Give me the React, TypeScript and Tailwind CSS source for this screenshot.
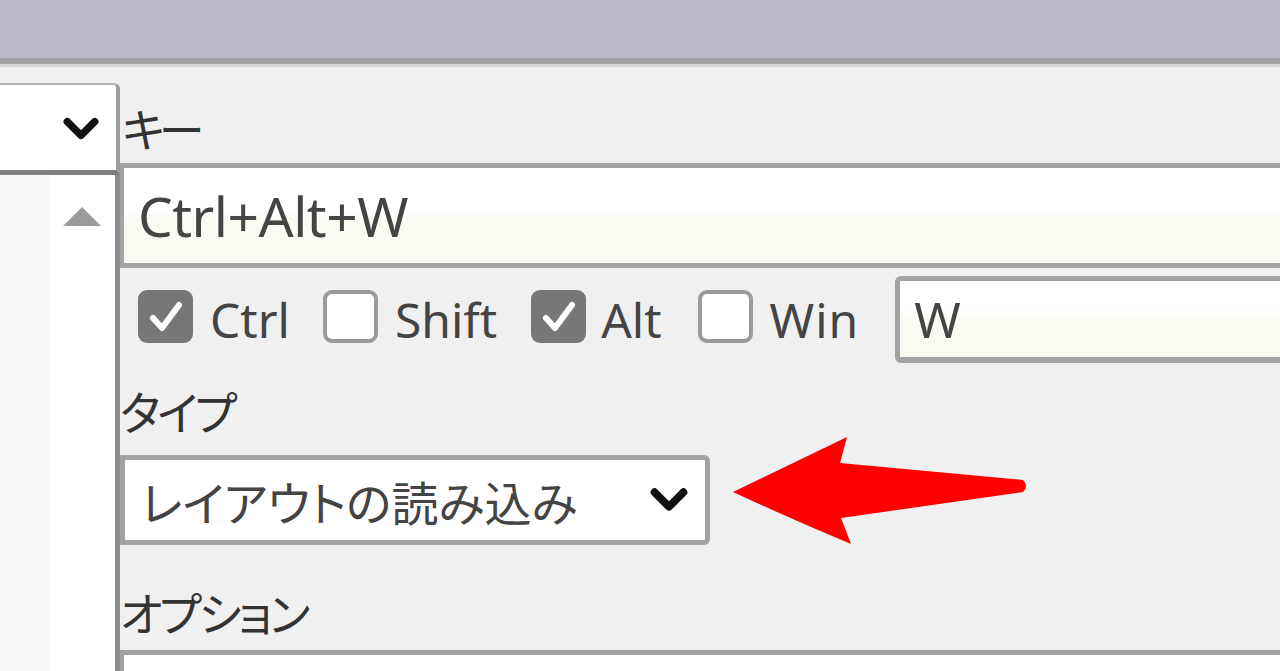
import React from "react";

const jp = "font-['Noto_Sans_CJK_JP',sans-serif] [font-feature-settings:'palt']";
const lat = "font-['Noto_Sans','Noto_Sans_CJK_JP',sans-serif]";

function Check({ checked }: { checked: boolean }) {
  if (checked) {
    return (
      <div className="w-[55px] h-[53px] rounded-[9px] bg-[#777777] flex items-center justify-center shrink-0">
        <svg width="36" height="34" viewBox="0 0 36 34">
          <polyline points="5,18 14,28 31,5" fill="none" stroke="#ffffff" strokeWidth="6" strokeLinecap="round" strokeLinejoin="round" />
        </svg>
      </div>
    );
  }
  return <div className="w-[55px] h-[53px] rounded-[9px] bg-white border-[4px] border-[#9a9a9a] shrink-0" />;
}

function Chevron({ w, h }: { w: number; h: number }) {
  return (
    <svg width={w} height={h} viewBox="0 0 36 24">
      <polyline points="5,5 18,18 31,5" fill="none" stroke="#111111" strokeWidth="7" strokeLinecap="round" strokeLinejoin="round" />
    </svg>
  );
}

export default function App() {
  return (
    <div className="relative w-[1280px] h-[671px] overflow-hidden bg-[#f0f0f0] flex flex-col">
      <div className="h-[58px] bg-[#bbbbc8] shrink-0" />
      <div className="h-[6px] bg-[#a3a3a3] shrink-0" />
      <div className="h-[3px] bg-[#d4d4d4] shrink-0" />
      <div className="flex flex-1 min-h-0">
        {/* left panel */}
        <div className="w-[120px] shrink-0 flex flex-col">
          <div className="h-[16px]" />
          <div className="h-[92px] bg-white border-t-2 border-[#b4b4b4] border-r-[4px] border-r-[#9c9c9c] border-b-[5px] border-b-[#7f7f7f] rounded-tr-[6px] flex items-center justify-end pr-[16px] pt-[2px]">
            <Chevron w={38} h={26} />
          </div>
          <div className="flex-1 flex border-r-[5px] border-[#8c8c8c]">
            <div className="w-[49px] bg-[#f8f8f8]" />
            <div className="flex-1 bg-white flex justify-center pt-[30px]">
              <svg width="42" height="22" viewBox="0 0 42 22">
                <polygon points="21,2 40,21 2,21" fill="#9a9a9a" />
              </svg>
            </div>
          </div>
        </div>

        {/* right panel */}
        <div className="flex-1 flex flex-col min-w-0">
          <div className={`${jp} text-[46px] leading-[48px] text-[#333333] tracking-[-6px] pl-[2px] pt-[36px] mb-[12px]`}>キー</div>
          <div className="h-[105px] border-y-[5px] border-l-[4px] border-[#a2a2a2] bg-[linear-gradient(to_bottom,#ffffff_0%,#ffffff_45%,#fafaf3_55%,#f9f9f2_100%)] flex items-center pl-[14px]">
            <span className={`${lat} text-[55px] leading-none text-[#444444] tracking-[-0.5px]`}>Ctrl+Alt+W</span>
          </div>
          <div className="flex items-center pt-[3px] h-[94px] pl-[18px]">
            <div className="flex items-center">
              <Check checked />
              <span className={`${lat} text-[48px] leading-none text-[#444444] ml-[17px] mr-[33px] pt-[6px]`}>Ctrl</span>
              <Check checked={false} />
              <span className={`${lat} text-[48px] leading-none text-[#444444] ml-[17px] mr-[34px] pt-[6px]`}>Shift</span>
              <Check checked />
              <span className={`${lat} text-[48px] leading-none text-[#444444] ml-[15px] mr-[36px] pt-[6px]`}>Alt</span>
              <Check checked={false} />
              <span className={`${lat} text-[48px] leading-none text-[#444444] ml-[17px] tracking-[1px] pt-[6px]`}>Win</span>
            </div>
            <div className="ml-[36px] flex-1 h-[87px] mt-[6px] border-t-[5px] border-l-[5px] border-b-[6px] border-[#a2a2a2] rounded-l-[6px] bg-[linear-gradient(to_bottom,#ffffff_0%,#ffffff_38%,#fafaf3_48%,#f9f9f2_100%)] flex items-center pl-[14px]">
              <span className={`${lat} text-[50px] leading-none text-[#444444]`}>W</span>
            </div>
          </div>
          <div className={`${jp} text-[46px] leading-[48px] text-[#333333] tracking-[-3px] mt-[24px] mb-[21px]`}>タイプ</div>
          <div className="relative flex items-center">
            <div className="w-[590px] h-[90px] bg-white border-[5px] border-[#a2a2a2] rounded-r-[6px] flex items-center justify-between pl-[16px] pr-[16px]">
              <span className={`${jp} text-[47px] leading-none text-[#444444]`}>レイアウトの読み込み</span>
              <Chevron w={40} h={28} />
            </div>
          </div>
          <div className={`${jp} text-[46px] leading-[48px] text-[#333333] tracking-[-3px] mt-[42px] mb-[15px]`}>オプション</div>
          <div className="flex-1 border-t-[5px] border-l-[4px] border-[#a2a2a2] bg-white" />
        </div>
      </div>

      {/* red annotation arrow */}
      <svg className="absolute left-[729px] top-[435px] pointer-events-none" width="300" height="112" viewBox="0 0 300 112">
        <path d="M4,57 Q60,30 118,2 L111,28 L294,45 Q300,51 294,57 L112,83 L122,109 Q62,84 4,57 Z" fill="#ff0000" />
      </svg>
    </div>
  );
}
